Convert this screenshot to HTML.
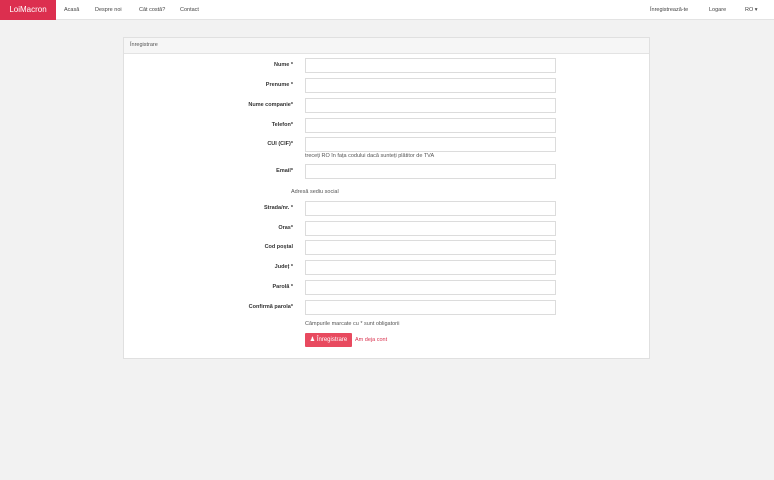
<!DOCTYPE html>
<html><head><meta charset="utf-8"><style>
*{box-sizing:border-box}
body{margin:0;width:774px;height:480px;background:#f2f2f2;font-family:"Liberation Sans",sans-serif;font-size:6px;color:#333;position:relative;overflow:hidden}
.nav{position:absolute;left:0;top:0;width:774px;height:20px;background:#fff;border-bottom:1px solid #e3e3e3}
.brand{position:absolute;left:0;top:0;width:56px;height:20px;background:#dc2f4f;color:#fff;font-size:8px;line-height:20px;text-align:center}
.nav span{position:absolute;top:0;line-height:20px;font-size:5.5px;color:#444}
.panel{position:absolute;left:123px;top:37px;width:527px;height:322px;background:#fff;border:1px solid #e0e0e0}
.ph{height:16px;background:#f6f6f6;border-bottom:1px solid #e3e3e3;line-height:15px;padding-left:6px;font-size:5.5px;color:#555}
.l{position:absolute;right:356px;font-weight:bold;font-size:5.5px;color:#333;text-align:right;line-height:15px;white-space:nowrap}
.i{position:absolute;left:181px;width:251px;height:15px;border:1px solid #dcdcdc;background:#fff}
.t{position:absolute;font-size:5.5px;color:#555;white-space:nowrap}
.btn{position:absolute;left:181px;top:295px;width:47px;height:14px;background:#e84a5f;color:#fff;font-size:6px;line-height:14px;text-align:center;border-radius:1px}
</style></head><body>
<div class="nav"><div class="brand">LoiMacron</div>
<span style="left:64px">Acasă</span><span style="left:95px">Despre noi</span><span style="left:139px">Cât costă?</span><span style="left:180px">Contact</span>
<span style="left:650px">Înregistrează-te</span><span style="left:709px">Logare</span><span style="left:745px">RO ▾</span></div>
<div class="panel"><div class="ph">Înregistrare</div>
<div class="l" style="top:20px">Nume *</div><div class="i" style="top:20px"></div>
<div class="l" style="top:40px">Prenume *</div><div class="i" style="top:40px"></div>
<div class="l" style="top:60px">Nume companie*</div><div class="i" style="top:60px"></div>
<div class="l" style="top:80px">Telefon*</div><div class="i" style="top:80px"></div>
<div class="l" style="top:99px">CUI (CIF)*</div><div class="i" style="top:99px"></div>
<div class="t" style="left:181px;top:115px">treceți RO în fața codului dacă sunteți plătitor de TVA</div>
<div class="l" style="top:126px">Email*</div><div class="i" style="top:126px"></div>
<div class="t" style="left:167px;top:151px">Adresă sediu social</div>
<div class="l" style="top:163px">Strada/nr. *</div><div class="i" style="top:163px"></div>
<div class="l" style="top:183px">Oras*</div><div class="i" style="top:183px"></div>
<div class="l" style="top:202px">Cod poștal</div><div class="i" style="top:202px"></div>
<div class="l" style="top:222px">Județ *</div><div class="i" style="top:222px"></div>
<div class="l" style="top:242px">Parolă *</div><div class="i" style="top:242px"></div>
<div class="l" style="top:262px">Confirmă parola*</div><div class="i" style="top:262px"></div>
<div class="t" style="left:181px;top:283px">Câmpurile marcate cu * sunt obligatorii</div>
<div class="btn">&#9823; Înregistrare</div>
<div class="t" style="left:231px;top:299px;color:#d9304d">Am deja cont</div>
</div>
</body></html>
